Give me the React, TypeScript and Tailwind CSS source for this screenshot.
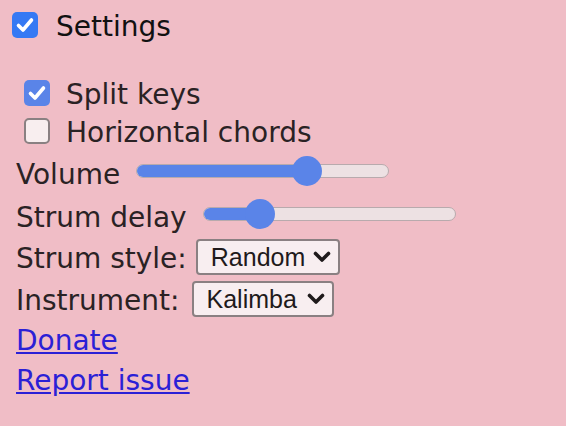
import React from 'react'

function Box({ checked, dim }: { checked: boolean; dim?: boolean }) {
  if (!checked) {
    return <div className="w-[26px] h-[26px] rounded-[5px] border-2 border-[#8a8082] bg-[#f8eeef] shrink-0" />
  }
  return (
    <div className={`w-[26px] h-[26px] rounded-[5px] flex items-center justify-center shrink-0 ${dim ? 'bg-[#5a84e8]' : 'bg-[#3579f4]'}`}>
      <svg width="26" height="26" viewBox="0 0 26 26">
        <path d="M6.5 13.5 L11 18 L19.5 8" fill="none" stroke="white" strokeWidth="3.6" strokeLinecap="round" strokeLinejoin="round" />
      </svg>
    </div>
  )
}

function Slider({ value }: { value: number }) {
  return (
    <div className="relative w-[253px] h-[30px] shrink-0 flex items-center">
      <div className="w-full h-[14px] rounded-full border-[1.5px] border-[#b8aaad] bg-[#ede1e3] overflow-hidden">
        <div className="h-full bg-[#5a84e8]" style={{ width: `${15 + value * 223}px` }} />
      </div>
      <div
        className="absolute top-0 w-[30px] h-[30px] rounded-full bg-[#5a84e8]"
        style={{ left: `${value * 223}px` }}
      />
    </div>
  )
}

function Select({ label, width }: { label: string; width: string }) {
  return (
    <div className={`${width} h-[36px] flex items-center justify-between pl-[13px] pr-[7px] rounded-[4px] border-2 border-[#8a8082] bg-[#f8eef0] font-['Liberation_Sans',sans-serif] text-[25px] text-[#1f1a1b]`}>
      <span>{label}</span>
      <svg width="18" height="12" viewBox="0 0 18 12">
        <path d="M2.5 2.5 L9 9 L15.5 2.5" fill="none" stroke="#1f1a1b" strokeWidth="3.6" strokeLinecap="round" strokeLinejoin="round" />
      </svg>
    </div>
  )
}

export default function App() {
  return (
    <div className="w-[566px] h-[426px] bg-[#f0bdc6] text-[#2a2224] font-['DejaVu_Sans',sans-serif] text-[28px] leading-none overflow-hidden">
      {/* header */}
      <div className="flex items-center h-[26px] mt-3 ml-3">
        <Box checked />
        <span className="ml-[18px] pt-[3px] text-[#111]">Settings</span>
      </div>

      <div className="mt-[36px] pl-4">
        <div className="h-[38px] flex items-center">
          <div className="ml-2"><Box checked dim /></div>
          <span className="ml-4 pt-[4px]">Split keys</span>
        </div>
        <div className="h-[38px] flex items-center">
          <div className="ml-2"><Box checked={false} /></div>
          <span className="ml-4 pt-[4px]">Horizontal chords</span>
        </div>

        <div className="h-[41px] flex items-center">
          <span className="pt-[8px]">Volume</span>
          <div className="ml-[16px]"><Slider value={0.7} /></div>
        </div>
        <div className="h-[45px] flex items-center">
          <span className="pt-[8px]">Strum delay</span>
          <div className="ml-[16px]"><Slider value={0.19} /></div>
        </div>

        <div className="h-[42px] flex items-center">
          <span className="pt-[3px]">Strum style:</span>
          <div className="ml-[9px]"><Select label="Random" width="w-[144px]" /></div>
        </div>
        <div className="h-[42px] flex items-center">
          <span className="pt-[3px]">Instrument:</span>
          <div className="ml-[12px]"><Select label="Kalimba" width="w-[142px]" /></div>
        </div>

        <div className="h-[40px] flex items-center">
          <a href="#" className="pt-[2px] text-[#2b20d6] underline underline-offset-2">Donate</a>
        </div>
        <div className="h-[40px] flex items-center">
          <a href="#" className="pt-[2px] text-[#2b20d6] underline underline-offset-2">Report issue</a>
        </div>
      </div>
    </div>
  )
}
